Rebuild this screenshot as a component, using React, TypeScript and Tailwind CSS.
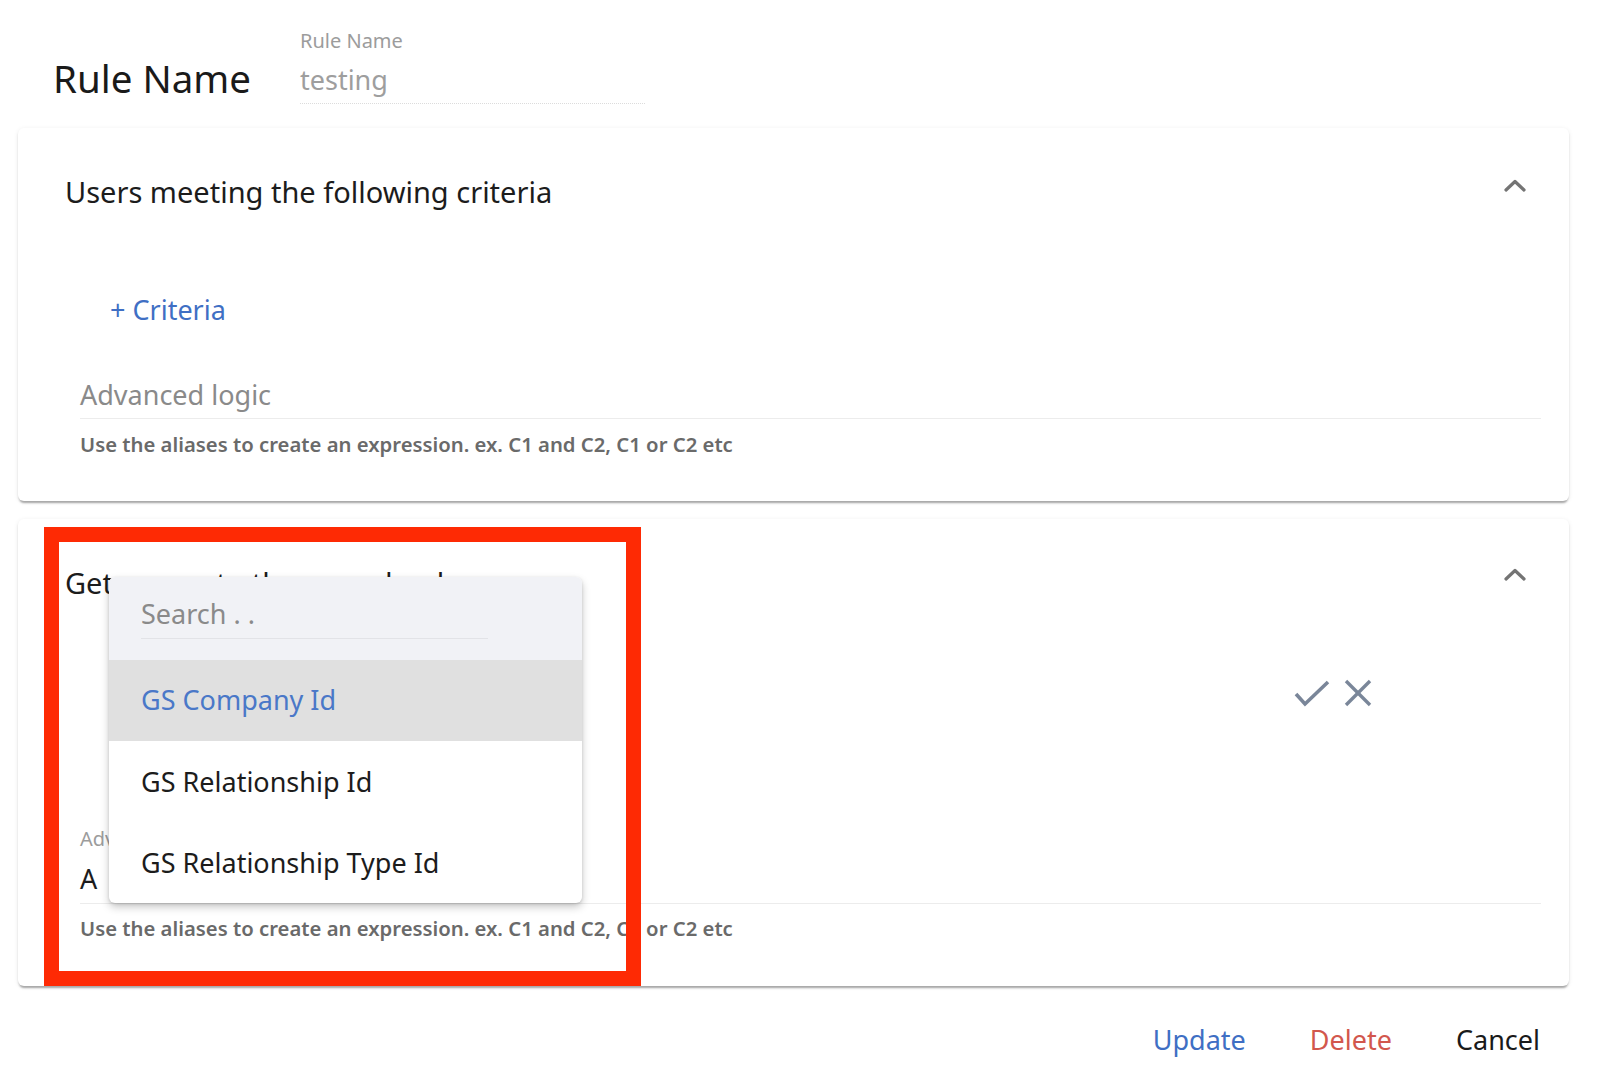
import React from "react";

const cardShadow =
  "shadow-[0_4px_2px_-2px_rgba(0,0,0,0.22),0_2px_2px_0_rgba(0,0,0,0.12),0_1px_5px_0_rgba(0,0,0,0.08)]";

function Chevron() {
  return (
    <svg width="22" height="13" viewBox="0 0 22 13" fill="none">
      <polyline
        points="2,11 11,2.5 20,11"
        stroke="#747474"
        strokeWidth="3.2"
        strokeLinecap="round"
        strokeLinejoin="round"
      />
    </svg>
  );
}

export default function App() {
  return (
    <div className="relative min-h-[1092px] w-[1600px] bg-white font-['Noto_Sans',_'Open_Sans',_sans-serif] text-[#1c1c1c]">
      {/* Header */}
      <div className="flex pl-[53px] pt-[28px]">
        <div className="w-[247px] pt-[31px] text-[38.5px] leading-[38px] text-[#1a1a1a]">Rule Name</div>
        <div className="w-[345px]">
          <div className="text-[20px] leading-[26px] text-[#9c9c9c]">Rule Name</div>
          <div className="mt-[8px] h-[42px] border-b border-dotted border-[#dcdcdc] text-[27px] leading-[36px] text-[#9e9e9e]">
            testing
          </div>
        </div>
      </div>

      {/* Card 1 */}
      <div className={`ml-[18px] mr-[31px] mt-[24px] rounded-[6px] bg-white ${cardShadow}`}>
        <div className="flex items-start justify-between pl-[47px] pr-[43px] pt-[44px]">
          <div className="text-[29px] leading-[40px]">Users meeting the following criteria</div>
          <div className="pt-[7px]">
            <Chevron />
          </div>
        </div>
        <div className="mt-[78px] pl-[92px] text-[27px] leading-[40px] text-[#3f6fc4]">+ Criteria</div>
        <div className="pl-[62px] pr-[28px]">
          <div className="mt-[45px] h-[44px] border-b border-[#ececec] text-[27px] leading-[40px] text-[#8a8a8a]">
            Advanced logic
          </div>
          <div className="mt-[12px] pb-[44px] text-[20.3px] font-semibold leading-[26px] text-[#6a6a6a]">
            Use the aliases to create an expression. ex. C1 and C2, C1 or C2 etc
          </div>
        </div>
      </div>

      {/* Card 2 */}
      <div className={`ml-[18px] mr-[31px] mt-[18px] rounded-[6px] bg-white ${cardShadow}`}>
        <div className="flex items-start justify-between pl-[47px] pr-[43px] pt-[44px]">
          <div className="text-[29px] leading-[40px]">Get access to the records where</div>
          <div className="pt-[5px]">
            <Chevron />
          </div>
        </div>
        <div className="mt-[60px] flex h-[60px] items-center justify-end gap-[14px] pr-[197px]">
          <svg width="36" height="28" viewBox="0 0 36 28" fill="none">
            <polyline points="2,15 11,25 34,3" stroke="#7a8699" strokeWidth="3.6" strokeLinejoin="miter" />
          </svg>
          <svg width="28" height="28" viewBox="0 0 28 28" fill="none">
            <line x1="2" y1="2" x2="26" y2="26" stroke="#7a8699" strokeWidth="3.4" />
            <line x1="26" y1="2" x2="2" y2="26" stroke="#7a8699" strokeWidth="3.4" />
          </svg>
        </div>
        <div className="pl-[62px] pr-[28px]">
          <div className="mt-[103px] text-[20px] leading-[26px] text-[#9c9c9c]">Advanced logic</div>
          <div className="mt-[9px] h-[43px] border-b border-[#ececec] text-[27px] leading-[36px] text-[#1c1c1c]">A</div>
          <div className="mt-[11px] pb-[45px] text-[20.3px] font-semibold leading-[26px] text-[#6a6a6a]">
            Use the aliases to create an expression. ex. C1 and C2, C1 or C2 etc
          </div>
        </div>
      </div>

      {/* Footer buttons */}
      <div className="mt-[34px] flex justify-end gap-[64px] pr-[60px] text-[27px] leading-[40px]">
        <span className="text-[#3f6fc4]">Update</span>
        <span className="text-[#d2574d]">Delete</span>
        <span className="text-[#1a1a1a]">Cancel</span>
      </div>

      {/* Dropdown overlay */}
      <div className="absolute left-[109px] top-[577px] w-[473px] overflow-hidden rounded-[6px] bg-white shadow-[0_4px_8px_rgba(0,0,0,0.22),0_1px_3px_rgba(0,0,0,0.12)]">
        <div className="h-[83px] bg-[#f1f2f6] px-[32px] pt-[18px]">
          <div className="h-[44px] w-[347px] border-b border-[#e2e3e7] text-[27px] leading-[38px] text-[#8a8a8a]">
            Search . .
          </div>
        </div>
        <div className="flex h-[81px] items-center bg-[#e0e0e0] px-[32px] text-[27px] text-[#4a78c8]">GS Company Id</div>
        <div className="flex h-[82px] items-center px-[32px] text-[27px] text-[#1c1c1c]">GS Relationship Id</div>
        <div className="flex h-[80px] items-center px-[32px] text-[27px] text-[#1c1c1c]">GS Relationship Type Id</div>
      </div>

      {/* Red annotation frame */}
      <div className="pointer-events-none absolute left-[44px] top-[527px] h-[459px] w-[597px] border-[15px] border-[#fe2a04]" />
    </div>
  );
}
